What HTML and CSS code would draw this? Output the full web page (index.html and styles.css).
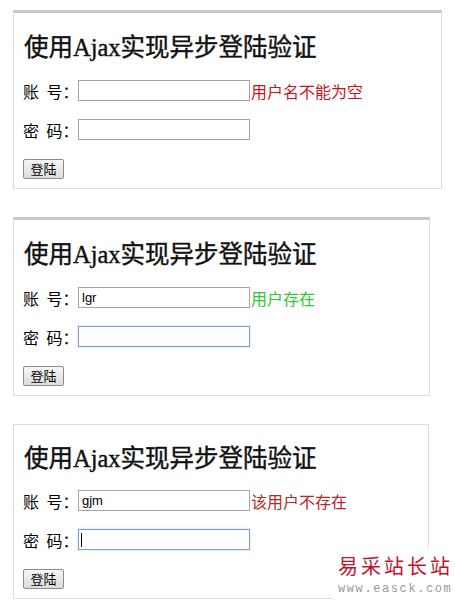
FILE: index.html
```html
<!DOCTYPE html>
<html lang="zh-CN">
<head>
    <meta charset="UTF-8">
    <meta name="viewport" content="width=device-width, initial-scale=1.0">
    <title>使用Ajax实现异步登陆验证</title>
    <link rel="stylesheet" href="styles.css">
</head>
<body>

    <!-- 账号为空 -->
    <div class="panel panel-wide">
        <h1>使用Ajax实现异步登陆验证</h1>
        <div class="row">
            <label>账 号：</label>
            <input type="text" class="text-input">
            <span class="msg msg-empty">用户名不能为空</span>
        </div>
        <div class="row">
            <label>密 码：</label>
            <input type="password" class="text-input">
        </div>
        <div class="row">
            <button type="button" class="btn">登陆</button>
        </div>
    </div>

    <!-- 用户存在 -->
    <div class="panel">
        <h1>使用Ajax实现异步登陆验证</h1>
        <div class="row">
            <label>账 号：</label>
            <input type="text" class="text-input" value="lgr">
            <span class="msg msg-ok">用户存在</span>
        </div>
        <div class="row">
            <label>密 码：</label>
            <input type="password" class="text-input focused">
        </div>
        <div class="row">
            <button type="button" class="btn">登陆</button>
        </div>
    </div>

    <!-- 用户不存在 -->
    <div class="panel panel-thin">
        <h1>使用Ajax实现异步登陆验证</h1>
        <div class="row">
            <label>账 号：</label>
            <input type="text" class="text-input" value="gjm">
            <span class="msg msg-none">该用户不存在</span>
        </div>
        <div class="row">
            <label>密 码：</label>
            <input type="password" class="text-input focused caret">
        </div>
        <div class="row">
            <button type="button" class="btn">登陆</button>
        </div>
    </div>

    <div class="watermark">
        <div class="wm-name">易采站长站</div>
        <div class="wm-url">www.easck.com</div>
    </div>

</body>
</html>
```

FILE: styles.css
```css
body {
    font-family: 'Liberation Serif', 'Noto Sans CJK SC', serif;
    background-color: #fff;
    margin: 10px 0 0 13px;
    padding: 0;
    color: #000;
}

.panel {
    width: 417px;
    border: 1px solid #dcdcdc;
    border-top: 3px solid #c8c8c8;
    padding: 0 9px 9px 8px;
    box-sizing: border-box;
    margin-bottom: 28px;
}

.panel-wide {
    width: 429px;
}

.panel-thin {
    width: 416px;
    border-top: 1px solid #dcdcdc;
}

h1 {
    font-size: 24.5px;
    font-weight: normal;
    line-height: 30px;
    margin: 20px 0 17px 2px;
    color: #111;
    -webkit-text-stroke: 0.4px #111;
}

.panel-thin h1 {
    margin-top: 19px;
    margin-bottom: 16px;
}

.row {
    display: flex;
    align-items: center;
    height: 21px;
    margin-bottom: 18px;
    font-family: 'Noto Sans CJK SC', sans-serif;
    font-size: 16px;
}

.row:last-child {
    margin-bottom: 0;
}

.row label {
    margin-left: 1px;
    width: 55px;
    word-spacing: 4px;
    white-space: nowrap;
}

.text-input {
    width: 172px;
    height: 21px;
    box-sizing: border-box;
    border: 1px solid #a5a5a5;
    padding: 0 3px;
    margin: 0;
    font-family: 'Liberation Sans', sans-serif;
    font-size: 13px;
    color: #000;
    outline: none;
}

.focused {
    border-color: #7d9bd3;
    box-shadow: 0 0 2px #c3d3f0;
}

.caret {
    background: linear-gradient(#000, #000) no-repeat 2px 3px / 1px 14px;
}

.msg {
    font-size: 16px;
    margin-left: 1px;
}

.msg-empty {
    color: #c8141e;
}

.msg-ok {
    color: #2ec82e;
}

.msg-none {
    color: #b42828;
}

.btn {
    margin-left: 1px;
    width: 41px;
    height: 20px;
    padding: 0;
    font-family: 'Noto Sans CJK SC', sans-serif;
    font-size: 13px;
    line-height: 18px;
    color: #000;
    background: linear-gradient(#f6f6f6, #dcdcdc);
    border: 1px solid #8c8c8c;
    border-radius: 2px;
}

.watermark {
    position: absolute;
    left: 333px;
    top: 547px;
    width: 122px;
    height: 61px;
    background-color: #fff;
    padding: 5px 0 0 5px;
    box-sizing: border-box;
    white-space: nowrap;
}

.wm-name {
    font-family: 'Noto Sans CJK SC', sans-serif;
    font-size: 20px;
    line-height: 28px;
    letter-spacing: 3px;
    color: #c4122c;
}

.wm-url {
    font-family: 'Liberation Mono', monospace;
    font-size: 12px;
    line-height: 18px;
    letter-spacing: 1.6px;
    color: #9a9a9a;
}
```
